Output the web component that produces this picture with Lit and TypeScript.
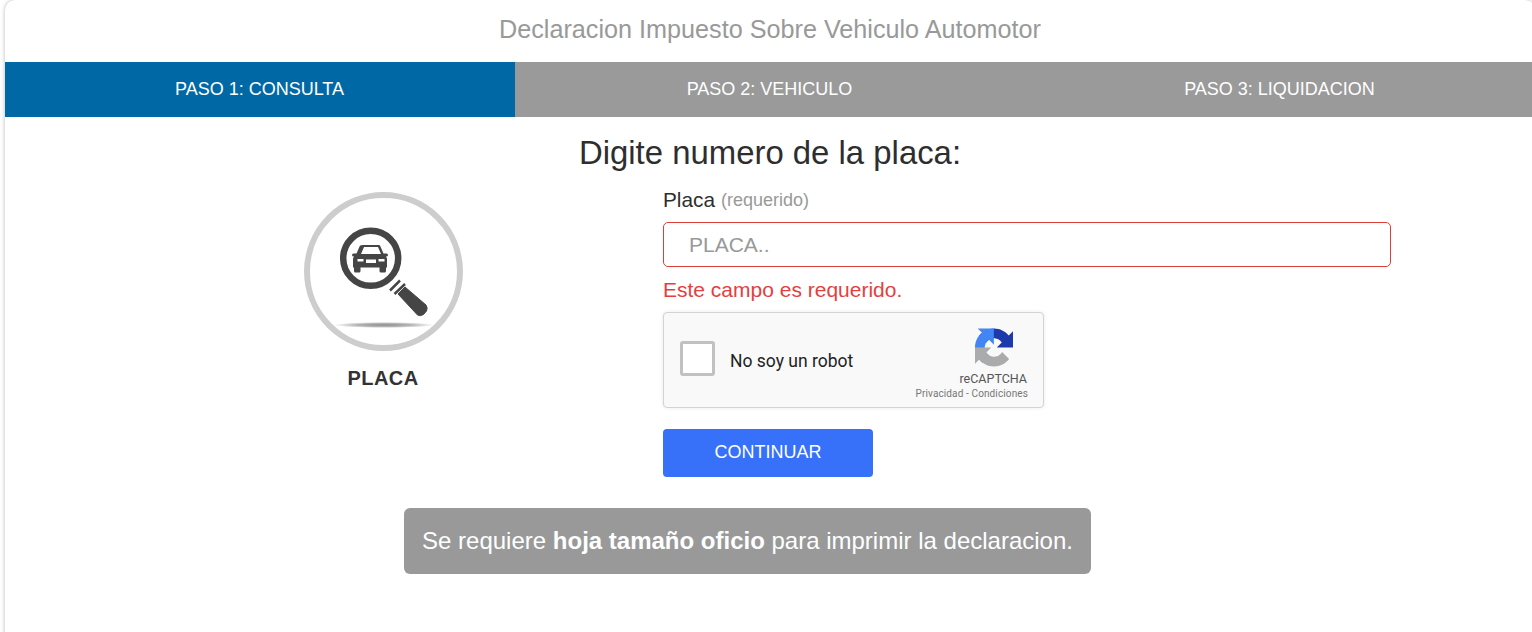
import { LitElement, html, css } from "lit";
import { customElement } from "lit/decorators.js";

@customElement("app-root")
export class AppRoot extends LitElement {
  static styles = css`
    :host { display: block; width: 1532px; height: 632px; overflow: hidden; background: #fff; font-family: "Liberation Sans", Arial, sans-serif; }
    * { box-sizing: border-box; }
    .card { margin-left: 5px; width: 1530px; height: 640px; background: #fff; border-radius: 10px 10px 0 0; box-shadow: 0 0 4px rgba(0,0,0,.28); overflow: hidden; }
    .title { height: 58px; display: flex; align-items: center; justify-content: center; color: #999; font-size: 25.2px; margin: 0 0 4px; font-weight: 400; }
    .steps { display: grid; grid-template-columns: repeat(3, 510px); height: 55px; }
    .step { display: flex; align-items: center; justify-content: center; padding-right: 1px; background: #9a9a9a; color: #fff; font-size: 18px; }
    .step.active { background: #0069a5; }
    h2 { margin: 0; height: 75px; padding-top: 17px; text-align: center; font-size: 32.9px; line-height: 38px; font-weight: 400; color: #2e2e2e; }
    .row { display: grid; grid-template-columns: 250px 728px; column-gap: 155px; padding-left: 253px; }
    .aside { display: flex; flex-direction: column; align-items: center; }
    .badge { display: block; width: 159px; height: 159px; }
    .badge-label { margin-top: 15px; font-size: 20px; line-height: 24px; font-weight: 700; color: #333; letter-spacing: .45px; }
    .form { display: flex; flex-direction: column; align-items: flex-start; }
    .lbl { height: 30px; margin-top: -7px; margin-bottom: 7px; display: flex; align-items: center; gap: 6px; font-size: 20.8px; color: #2e2e2e; }
    .lbl small { font-size: 18px; color: #999; }
    input { width: 728px; height: 45px; border: 1px solid #dc3f3a; border-radius: 5px; padding: 0 25px; font: 21px "Liberation Sans", Arial, sans-serif; outline: none; background: #fff; }
    input::placeholder { color: #999; opacity: 1; }
    .err { margin-top: 11px; font-size: 21px; line-height: 24px; color: #e53e3e; }
    .captcha { margin-top: 10px; width: 381px; height: 96px; background: #f9f9f9; border: 1px solid #d3d3d3; border-radius: 4px; box-shadow: 0 0 4px rgba(0,0,0,.08); display: flex; align-items: center; padding-left: 16px; font-family: Roboto, sans-serif; }
    .box { width: 35px; height: 35px; margin-bottom: 4px; background: #fff; border: 3px solid #c1c1c1; border-radius: 3px; flex: none; }
    .robot { margin-left: 15px; margin-top: 1px; font-size: 17.5px; color: #222; flex: 1; }
    .brand { height: 100%; display: flex; flex-direction: column; align-items: flex-end; padding-top: 15px; margin-right: 15px; color: #555; }
    .brand svg { width: 38px; height: 39px; display: block; margin-right: 15px; }
    .brand .a { font-size: 12.5px; line-height: 15px; margin-top: 4px; margin-right: 1px; }
    .brand .b { font-size: 10px; line-height: 14px; margin-top: 1px; color: #777; letter-spacing: .12px; }
    button { margin-top: 21px; width: 210px; height: 48px; padding: 0 0 2px; border: 0; border-radius: 4px; background: #3771fa; color: #fff; font: 18px "Liberation Sans", Arial, sans-serif; }
    .note-wrap { display: flex; padding-left: 399px; margin-top: 31px; }
    .note { width: 687px; height: 66px; display: flex; align-items: center; justify-content: center; white-space: pre; background: #999; color: #fff; border-radius: 6px; font-size: 24px; }
  `;

  render() {
    return html`
      <div class="card">
        <h1 class="title">Declaracion Impuesto Sobre Vehiculo Automotor</h1>
        <div class="steps">
          <div class="step active">PASO 1: CONSULTA</div>
          <div class="step">PASO 2: VEHICULO</div>
          <div class="step">PASO 3: LIQUIDACION</div>
        </div>
        <h2>Digite numero de la placa:</h2>
        <div class="row">
          <div class="aside">
            <svg class="badge" viewBox="0 0 159 159">
              <defs>
                <radialGradient id="sh"><stop offset="0" stop-color="#8c8c8c"/><stop offset=".55" stop-color="#b5b5b5"/><stop offset="1" stop-color="#fff"/></radialGradient>
              </defs>
              <circle cx="79.5" cy="79.5" r="76.5" fill="#fff" stroke="#cdcdcd" stroke-width="6"/>
              <ellipse cx="80" cy="133" rx="50" ry="3" fill="url(#sh)"/>
              <circle cx="66.7" cy="66.3" r="27.5" fill="#fff" stroke="#454545" stroke-width="6.5"/>
              <path d="M86 98.500l10-10" stroke="#454545" stroke-width="2.500" fill="none"/>
              <path d="M90.500 102l10.500-10" stroke="#454545" stroke-width="2.500" fill="none"/>
              <path d="M94 102l7-7 21 18q2 3 .5 6l-3 3.500q-3 2-6 .5z" fill="#454545" stroke="#454545" stroke-width="1" stroke-linejoin="round"/>
              <path fill="#454545" d="M59 53h16l1 .5 3.500 8h3q1.500 0 1.500 1.500t-2 1.500l1 2v9h-1v3.500q0 1.500-1.500 1.500h-3.500q-1.500 0-1.500-1.500v-3.500h-19v3.500q0 1.500-1.500 1.500h-3.500q-1.500 0-1.500-1.500v-3.500h-1v-9l1-2q-2 0-2-1.500t1.500-1.500h3l3.500-8z"/>
              <path fill="#fff" d="M60 55h14l3 7h-20zM53.500 67h6v2.500h-6zM74.500 67h6v2.500h-6zM62 67.500h10v3.500h-10z"/>
            </svg>
            <div class="badge-label">PLACA</div>
          </div>
          <div class="form">
            <div class="lbl">Placa <small>(requerido)</small></div>
            <input placeholder="PLACA.." />
            <div class="err">Este campo es requerido.</div>
            <div class="captcha">
              <div class="box"></div>
              <div class="robot">No soy un robot</div>
              <div class="brand">
                <svg viewBox="0 0 64 64">
                  <path d="M64 31.955l-.033-1.37V4.687l-7.16 7.16C50.948 4.674 42.033.093 32.05.093c-10.4 0-19.622 4.96-25.458 12.64l11.736 11.86a15.55 15.55 0 014.754-5.334c2.05-1.6 4.952-2.906 8.968-2.906.485 0 .86.057 1.135.163 4.976.393 9.288 3.14 11.828 7.124l-8.307 8.307c10.522-.04 22.4-.066 27.295.006" fill="#1c3aa9"/>
                  <path d="M31.862.094l-1.37.033H4.594l7.16 7.16C4.58 13.147 0 22.06 0 32.046c0 10.4 4.96 19.622 12.64 25.458l11.86-11.736a15.55 15.55 0 01-5.334-4.754c-1.6-2.05-2.906-4.952-2.906-8.968 0-.485.057-.86.163-1.135.393-4.976 3.14-9.288 7.124-11.828l8.307 8.307c-.04-10.522-.066-22.4.006-27.295" fill="#4285f4"/>
                  <path d="M.001 32.045l.033 1.37v25.898l7.16-7.16c5.86 7.173 14.774 11.754 24.76 11.754 10.4 0 19.622-4.96 25.458-12.64l-11.736-11.86a15.55 15.55 0 01-4.754 5.334c-2.05 1.6-4.952 2.906-8.968 2.906-.485 0-.86-.057-1.135-.163-4.976-.393-9.288-3.14-11.828-7.124l8.307-8.307c-10.522.04-22.4.066-27.295-.006" fill="#ababab"/>
                </svg>
                <div class="a">reCAPTCHA</div>
                <div class="b">Privacidad - Condiciones</div>
              </div>
            </div>
            <button>CONTINUAR</button>
          </div>
        </div>
        <div class="note-wrap">
          <div class="note">Se requiere <b>hoja tamaño oficio</b> para imprimir la declaracion.</div>
        </div>
      </div>
    `;
  }
}
